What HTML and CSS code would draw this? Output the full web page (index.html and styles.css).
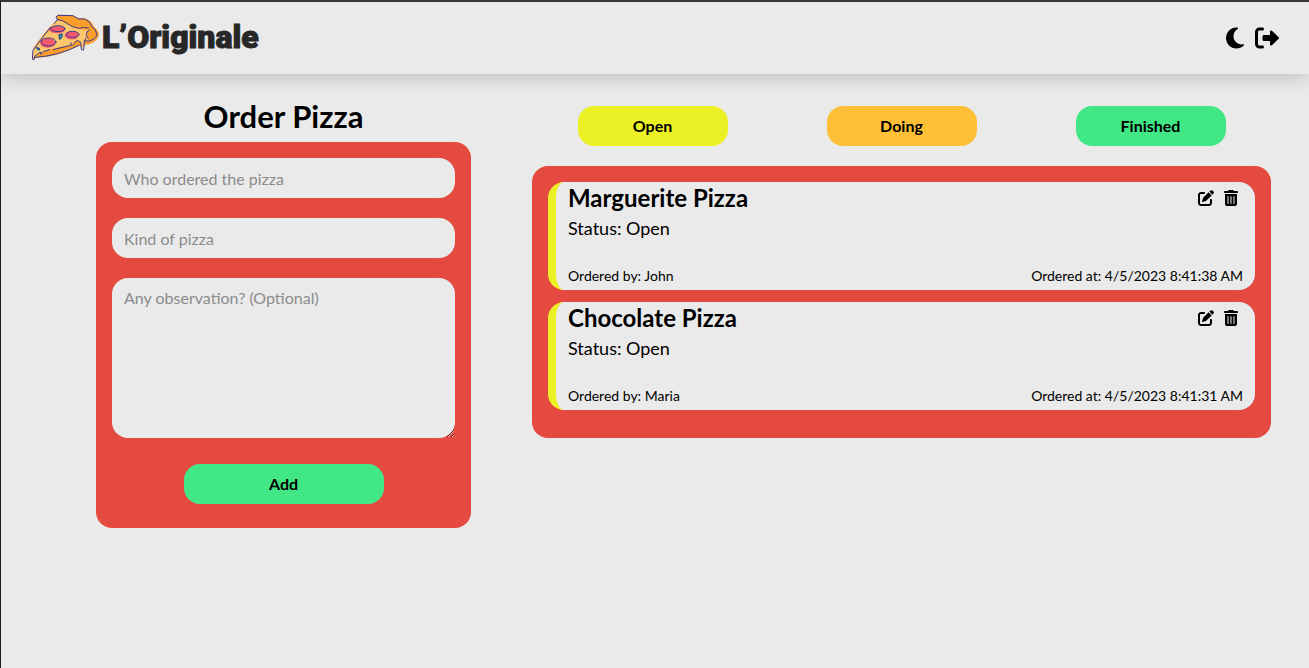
FILE: index.html
```html
<!DOCTYPE html>
<html lang="en">
<head>
<meta charset="utf-8">
<title>L'Originale</title>
<meta name="viewport" content="width=device-width, initial-scale=1">
<link rel="stylesheet" href="styles.css">
</head>
<body>
<svg class="sprite" aria-hidden="true">
  <symbol id="edit" viewBox="0 0 512 512"><path d="M471.600 21.700c-21.900-21.900-57.300-21.900-79.200 0L362.300 51.700l97.900 97.900 30.100-30.100c21.900-21.900 21.900-57.300 0-79.200L471.600 21.700zm-299.200 220c-6.100 6.100-10.800 13.600-13.500 21.900l-29.600 88.800c-2.900 8.600-.6 18.100 5.800 24.600s15.900 8.700 24.600 5.800l88.800-29.600c8.200-2.700 15.700-7.400 21.900-13.500L437.700 172.300 339.700 74.300 172.400 241.700zM96 64C43 64 0 107 0 160V416c0 53 43 96 96 96H352c53 0 96-43 96-96V320c0-17.700-14.300-32-32-32s-32 14.300-32 32v96c0 17.700-14.300 32-32 32H96c-17.700 0-32-14.300-32-32V160c0-17.700 14.300-32 32-32h96c17.700 0 32-14.300 32-32s-14.300-32-32-32H96z"/></symbol>
  <symbol id="trash" viewBox="0 0 448 512"><path d="M135.200 17.700C140.600 6.800 151.700 0 163.800 0H284.200c12.100 0 23.200 6.800 28.600 17.700L320 32h96c17.700 0 32 14.300 32 32s-14.300 32-32 32H32C14.300 96 0 81.700 0 64S14.300 32 32 32h96l7.200-14.300zM32 128H416V448c0 35.300-28.700 64-64 64H96c-35.300 0-64-28.700-64-64V128zm96 64c-8.800 0-16 7.200-16 16V432c0 8.800 7.200 16 16 16s16-7.200 16-16V208c0-8.800-7.200-16-16-16zm96 0c-8.800 0-16 7.200-16 16V432c0 8.800 7.200 16 16 16s16-7.200 16-16V208c0-8.800-7.200-16-16-16zm96 0c-8.800 0-16 7.200-16 16V432c0 8.800 7.200 16 16 16s16-7.200 16-16V208c0-8.800-7.200-16-16-16z"/></symbol>
</svg>

<header class="topbar">
  <a class="brand" href="#">
    <svg class="brand-mark" viewBox="90 36 210 150" aria-hidden="true">
      <path class="crust" d="M169 49Q171 43 181 44L215 45Q227 50 235 55Q250 52 262 58Q277 66 281 79Q295 92 297 102Q296 116 283 125Q272 133 254 135L248 143 238 137C210 150 172 166 136 171L106 174 98 182 99 146Q128 100 171 60Z"/>
      <path class="cheese" d="M171 59Q194 65 215 80Q240 91 267 90L258 106 264 118 253 123 248 150 241 123 226 121 219 134 165 144 120 158 103 171 98 181 98 153 132 105Z"/>
      <g class="salami">
        <ellipse cx="171" cy="89" rx="24" ry="11"/>
        <ellipse cx="215" cy="106" rx="21" ry="12"/>
        <ellipse cx="143" cy="129" rx="23" ry="14"/>
      </g>
      <path class="leaf" d="M176 103L188 100 188 111 181 120 176 116ZM109 141L120 144 118 152 109 149Z"/>
      <g class="ink">
        <path d="M172 58L168 51 174 46 219 47Q228 53 237 57Q254 53 267 65L276 80Q288 89 291 103Q287 118 265 124L254 122"/>
        <path d="M172 59Q186 58 199 69Q215 83 238 85Q254 80 265 84M269 90Q257 94 260 104Q255 105 265 115"/>
        <path d="M171 60L163 70M151 82L99 151 97 177 102 179 104 169 121 156 122 163 132 154 149 149M160 149L215 135 212 128M218 136L231 121 242 127 244 149 251 150 253 124 258 114"/>
        <path d="M107 172Q178 167 237 136"/>
        <ellipse cx="174" cy="86" rx="21" ry="9"/>
        <ellipse cx="218" cy="103" rx="19" ry="9"/>
        <ellipse cx="146" cy="126" rx="22" ry="12"/>
        <path d="M178 104L186 102 186 110 180 117ZM110 143L118 145 117 150Z"/>
      </g>
    </svg>
    <span class="brand-name">L’Originale</span>
  </a>
  <div class="tools">
    <button type="button" class="icon-button" aria-label="Dark mode">
      <svg class="moon" viewBox="0 0 384 512" aria-hidden="true"><path d="M223.500 32C100 32 0 132.300 0 256S100 480 223.500 480c60.600 0 115.500-24.200 155.800-63.400c5-4.900 6.300-12.500 3.100-18.700s-10.100-9.700-17-8.500c-9.800 1.700-19.800 2.600-30.100 2.600c-96.900 0-175.500-78.800-175.500-176c0-65.800 36-123.100 89.300-153.300c6.100-3.500 9.200-10.500 7.700-17.300s-7.300-11.900-14.300-12.500c-6.300-.5-12.600-.8-19-.8z"/></svg>
    </button>
    <button type="button" class="icon-button" aria-label="Log out">
      <svg class="exit" viewBox="0 0 512 512" aria-hidden="true"><path d="M160 96c17.700 0 32-14.300 32-32s-14.300-32-32-32H96C43 32 0 75 0 128V384c0 53 43 96 96 96h64c17.700 0 32-14.300 32-32s-14.300-32-32-32H96c-17.700 0-32-14.300-32-32V128c0-17.700 14.300-32 32-32h64zM504.500 273.400c4.800-4.500 7.500-10.800 7.500-17.400s-2.700-12.900-7.500-17.400l-144-136c-7-6.600-17.200-8.400-26-4.600s-14.500 12.500-14.500 22v72H192c-17.700 0-32 14.300-32 32v64c0 17.700 14.300 32 32 32H320v72c0 9.600 5.700 18.200 14.500 22s19 2 26-4.600l144-136z"/></svg>
    </button>
  </div>
</header>

<main class="layout">
  <section>
    <h1 class="form-title">Order Pizza</h1>
    <form class="panel order-form">
      <input class="field" type="text" aria-label="Who ordered the pizza" placeholder="Who ordered the pizza">
      <input class="field" type="text" aria-label="Kind of pizza" placeholder="Kind of pizza">
      <textarea class="field field-notes" aria-label="Any observation? (Optional)" placeholder="Any observation? (Optional)"></textarea>
      <button type="button" class="pill pill-add">Add</button>
    </form>
  </section>

  <section>
    <div class="filters">
      <button type="button" class="pill pill-open">Open</button>
      <button type="button" class="pill pill-doing">Doing</button>
      <button type="button" class="pill">Finished</button>
    </div>
    <div class="panel orders">
      <article class="order">
        <div class="order-row">
          <h2 class="order-name">Marguerite Pizza</h2>
          <div class="order-actions">
            <button type="button" class="icon-button" aria-label="Edit Marguerite Pizza"><svg class="edit"><use href="#edit"/></svg></button>
            <button type="button" class="icon-button" aria-label="Delete Marguerite Pizza"><svg class="trash"><use href="#trash"/></svg></button>
          </div>
        </div>
        <p class="order-status">Status: Open</p>
        <div class="order-row order-meta"><span>Ordered by: John</span><span>Ordered at: 4/5/2023 8:41:38 AM</span></div>
      </article>
      <article class="order">
        <div class="order-row">
          <h2 class="order-name">Chocolate Pizza</h2>
          <div class="order-actions">
            <button type="button" class="icon-button" aria-label="Edit Chocolate Pizza"><svg class="edit"><use href="#edit"/></svg></button>
            <button type="button" class="icon-button" aria-label="Delete Chocolate Pizza"><svg class="trash"><use href="#trash"/></svg></button>
          </div>
        </div>
        <p class="order-status">Status: Open</p>
        <div class="order-row order-meta"><span>Ordered by: Maria</span><span>Ordered at: 4/5/2023 8:41:31 AM</span></div>
      </article>
    </div>
  </section>
</main>
</body>
</html>
```
FILE: styles.css
```css
:root {
  --surface: #eaeaea;
  --red: #e44a40;
  --green: #41e785;
  --yellow: #ebf125;
  --orange: #ffbf37;
}

* {
  box-sizing: border-box;
  margin: 0;
}

body {
  min-height: 100vh;
  border-top: 2px solid #383637;
  border-left: 1px solid #1f1d1e;
  background: var(--surface);
  color: #000;
  font-family: Lato, "Liberation Sans", sans-serif;
  font-size: 16px;
}

button,
input,
textarea {
  font: inherit;
  color: inherit;
}

.sprite {
  display: none;
}

.topbar {
  display: flex;
  align-items: center;
  justify-content: space-between;
  height: 72px;
  padding: 0 30px 2px 29px;
  box-shadow: 0 0 20px rgba(0, 0, 0, 0.25);
}

.brand {
  display: flex;
  align-items: center;
  gap: 2px;
  color: #272727;
  text-decoration: none;
}

.brand-mark {
  width: 70px;
  height: 50px;
}

.brand-name {
  font-family: Roboto, "Liberation Sans", sans-serif;
  font-size: 32px;
  font-weight: 900;
  line-height: 40px;
  -webkit-text-stroke: 1px #272727;
}

.crust { fill: #fb9d2b; }
.cheese { fill: #fcc66f; }
.salami { fill: #f4586c; }
.leaf { fill: #39aa97; }

.ink {
  fill: none;
  stroke: #383b90;
  stroke-width: 3;
  stroke-linecap: round;
  stroke-linejoin: round;
}

.tools {
  display: flex;
  gap: 8px;
  padding-top: 2px;
}

.icon-button {
  display: flex;
  align-items: center;
  justify-content: center;
  padding: 0;
  border: 0;
  background: none;
  cursor: pointer;
}

.icon-button svg {
  fill: currentColor;
}

.moon,
.exit {
  width: 24px;
  height: 24px;
}

.edit,
.trash {
  width: 16px;
  height: 16px;
}

.layout {
  display: grid;
  grid-template-columns: 375px 1fr;
  gap: 61px;
  padding: 24px 38px 24px 95px;
}

.form-title {
  margin-bottom: 8px;
  font-size: 31px;
  font-weight: 700;
  line-height: 36px;
  text-align: center;
}

.panel {
  display: flex;
  flex-direction: column;
  border-radius: 16px;
  background: var(--red);
}

.order-form {
  gap: 20px;
  padding: 16px 16px 24px;
}

.field {
  width: 100%;
  height: 40px;
  padding: 2px 12px;
  border: 0;
  border-radius: 16px;
  outline: 0;
  background: var(--surface);
}

.field::placeholder {
  color: #8c8c8c;
}

.field-notes {
  height: 160px;
  padding: 10px 12px;
  resize: vertical;
}

.pill {
  width: 150px;
  height: 40px;
  padding: 0 0 2px;
  border: 0;
  border-radius: 16px;
  background: var(--green);
  font-weight: 700;
  cursor: pointer;
}

.pill-open { background: var(--yellow); }
.pill-doing { background: var(--orange); }

.pill-add {
  width: 200px;
  margin-top: 6px;
  align-self: center;
}

.filters {
  display: grid;
  grid-template-columns: repeat(3, 1fr);
  gap: 8px;
  justify-items: center;
  margin: 8px 0 20px;
}

.orders {
  gap: 12px;
  padding: 16px 16px 28px;
}

.order {
  padding: 0 12px 4px;
  border-left: 8px solid var(--yellow);
  border-radius: 16px;
  background: var(--surface);
}

.order-row {
  display: flex;
  align-items: center;
  justify-content: space-between;
}

.order-name {
  font-size: 24px;
  font-weight: 700;
  line-height: 32px;
}

.order-actions {
  display: flex;
  gap: 9px;
  padding-right: 4px;
}

.order-status {
  font-size: 18px;
  line-height: 28px;
}

.order-meta {
  margin-top: 24px;
  font-size: 14px;
  line-height: 20px;
}
```
